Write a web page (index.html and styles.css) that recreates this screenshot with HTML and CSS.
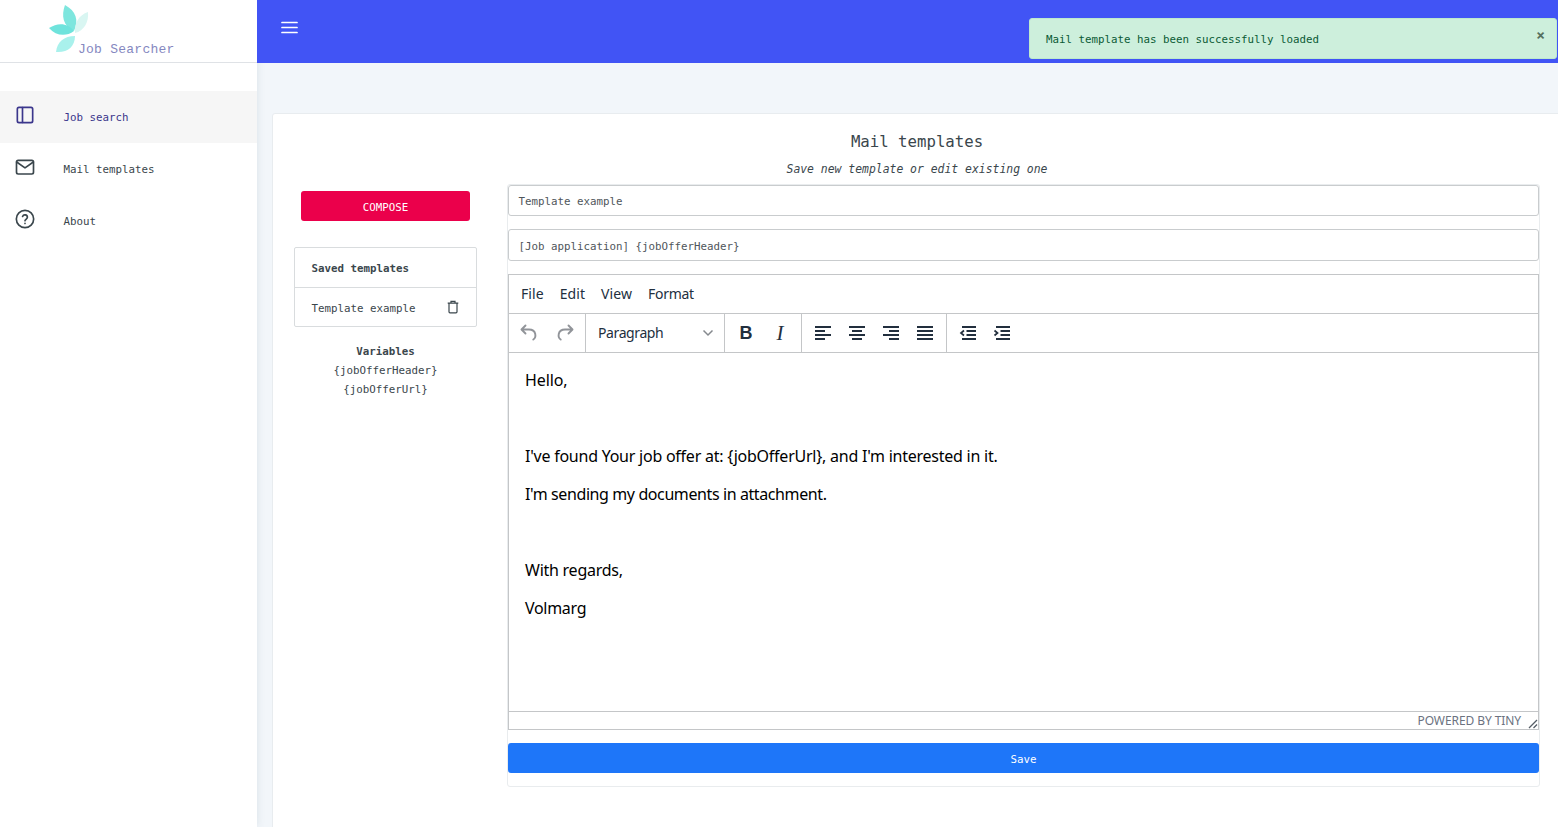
FILE: index.html
```html
<!DOCTYPE html>
<html lang="en">
<head>
<meta charset="utf-8">
<title>Job Searcher</title>
<link rel="stylesheet" href="styles.css">
</head>
<body>
<div class="app">
  <aside class="sidebar">
    <div class="brand">
      <svg class="brand-mark" width="42" height="50" viewBox="0 0 42 50">
        <path fill="#7ee6de" d="M16 0C27 6 30 15 25 26C14 21 12 11 16 0Z"/>
        <path fill="#d9f6f2" d="M39 7C40 17 35 26 26 28C25 18 30 10 39 7Z"/>
        <path fill="#6fe3dc" d="M0 23C9 17 19 18 25 26C17 32 7 31 0 23Z"/>
        <path fill="#a9f1ec" d="M26 31C26 42 18 48 7 47C8 37 15 31 26 31Z"/>
      </svg>
      <span class="brand-name">Job Searcher</span>
    </div>
    <nav class="nav">
      <a class="nav-item active">
        <svg width="20" height="20" viewBox="0 0 24 24"><rect x="2.8" y="2.8" width="18.4" height="18.4" rx="2"/><path d="M9 3v18"/></svg>
        <span>Job search</span>
      </a>
      <a class="nav-item">
        <svg width="20" height="20" viewBox="0 0 24 24"><rect x="1.8" y="4" width="20.4" height="16.4" rx="2"/><path d="M22 6l-10 7L2 6"/></svg>
        <span>Mail templates</span>
      </a>
      <a class="nav-item">
        <svg width="20" height="20" viewBox="0 0 24 24"><circle cx="12" cy="12" r="10.4"/><path d="M9.1 9a3 3 0 0 1 5.8 1c0 2-2.9 2.6-2.9 4M12 17.2v.3"/></svg>
        <span>About</span>
      </a>
    </nav>
  </aside>
  <div class="page">
    <header class="topbar">
      <svg width="18" height="14" viewBox="0 0 18 14"><path d="M1 1.500h15M1 6.500h15M1 11.500h15"/></svg>
    </header>
    <main class="card">
      <h1 class="title">Mail templates</h1>
      <p class="subtitle">Save new template or edit existing one</p>
      <div class="columns">
        <section class="side">
          <button class="compose">COMPOSE</button>
          <div class="saved">
            <div class="saved-head">Saved templates</div>
            <div class="saved-row">
              <span>Template example</span>
              <svg width="12" height="14" viewBox="0 0 12 14"><path d="M.7 3.2h10.6M2 3.2v8.6q0 1 1 1h6q1 0 1-1V3.2M4 3V1.3h4V3"/></svg>
            </div>
          </div>
          <div class="variables">
            <strong>Variables</strong>
            <span>{jobOfferHeader}</span>
            <span>{jobOfferUrl}</span>
          </div>
        </section>
        <form class="form">
          <div class="field first">Template example</div>
          <div class="field second">[Job application] {jobOfferHeader}</div>
          <div class="editor">
            <div class="menubar"><span>File</span><span>Edit</span><span>View</span><span class="m-format">Format</span></div>
            <div class="toolbar">
              <div class="group history">
                <svg class="muted" width="24" height="24" viewBox="0 0 24 24"><path d="M8.500 4.500l-4 4 4 4M5 8.500h7c3.500 0 5.600 1.700 6.200 4.300.5 2.400-.3 4.800-1.900 5.700"/></svg>
                <svg class="muted" width="24" height="24" viewBox="0 0 24 24"><path d="M15.500 4.500l4 4-4 4M19 8.500h-7c-3.500 0-5.600 1.700-6.200 4.300-.5 2.400.3 4.800 1.900 5.700"/></svg>
              </div>
              <div class="group format"><span>Paragraph</span><svg width="12" height="8" viewBox="0 0 12 8"><path d="M1.500 1.500L6 6l4.500-4.500"/></svg></div>
              <div class="group icons"><span class="bold">B</span><span class="italic">I</span></div>
              <div class="group icons">
                <svg width="24" height="24" viewBox="0 0 24 24"><path d="M4 6h16M4 10h10M4 14h16M4 18h10"/></svg>
                <svg width="24" height="24" viewBox="0 0 24 24"><path d="M4 6h16M7 10h10M4 14h16M7 18h10"/></svg>
                <svg width="24" height="24" viewBox="0 0 24 24"><path d="M4 6h16M10 10h10M4 14h16M10 18h10"/></svg>
                <svg width="24" height="24" viewBox="0 0 24 24"><path d="M4 6h16M4 10h16M4 14h16M4 18h16"/></svg>
              </div>
              <div class="group icons last">
                <svg width="24" height="24" viewBox="0 0 24 24"><path d="M6 6h14M10.500 10H20M10.500 14H20M6 18h14"/><path class="arrow" d="M8 9.500L5 12l3 2.500"/></svg>
                <svg width="24" height="24" viewBox="0 0 24 24"><path d="M6 6h14M10.500 10H20M10.500 14H20M6 18h14"/><path class="arrow" d="M4.500 9.500l3 2.500-3 2.500"/></svg>
              </div>
            </div>
            <div class="content">
              <p class="w1">Hello,</p>
              <p>&nbsp;</p>
              <p class="w2">I've found Your job offer at: {jobOfferUrl}, and I'm interested in it.</p>
              <p class="w3">I'm sending my documents in attachment.</p>
              <p>&nbsp;</p>
              <p class="w4">With regards,</p>
              <p class="w5">Volmarg</p>
            </div>
            <div class="status"><span>POWERED BY TINY</span><svg width="10" height="10" viewBox="0 0 10 10"><path d="M1 9l8-8M5.500 9L9 5.500"/></svg></div>
          </div>
          <button class="save" type="button">Save</button>
        </form>
      </div>
    </main>
  </div>
  <div class="toast"><span>Mail template has been successfully loaded</span><b>×</b></div>
</div>
</body>
</html>
```
FILE: styles.css
```css
* { box-sizing: border-box; }
body {
  margin: 0;
  overflow: hidden;
  font-family: "DejaVu Sans Mono", monospace;
  font-size: 10.8px;
  color: #3a464c;
  background: #f2f6fa;
}
button { font: inherit; border: 0; padding: 0; color: #fff; display: block; }
svg { display: block; flex: none; fill: none; }
.app { display: flex; width: 1558px; height: 827px; position: relative; overflow: hidden; }

.sidebar { flex: none; width: 257px; background: #fff; box-shadow: 0 0 8px rgba(60, 90, 110, .13); }
.brand { display: flex; height: 63px; border-bottom: 1px solid #dfe2e6; padding: 5px 0 0 49px; }
.brand-name {
  font-family: "Liberation Mono", monospace;
  font-size: 13px;
  line-height: 16px;
  letter-spacing: .25px;
  color: #8588bf;
  margin: 37px 0 0 -13px;
}
.nav { padding-top: 28px; }
.nav-item { display: flex; height: 52px; align-items: center; gap: 29px; padding-left: 14.5px; }
.nav-item span { padding-top: 1px; }
.nav-item svg { stroke: #3a464c; stroke-width: 2; stroke-linecap: round; stroke-linejoin: round; margin-bottom: 4px; }
.nav-item.active { background: #f6f6f6; color: #3b368c; }
.nav-item.active svg { stroke: #3b368c; }

.page { flex: none; width: 1304px; }
.topbar { height: 63px; background: #4154f5; padding: 21px 24px; }
.topbar svg { stroke: #fff; stroke-width: 1.7; stroke-linecap: round; }
.card {
  width: 1290px;
  height: 720px;
  margin: 50px 0 0 15px;
  border: 1px solid #e8ecef;
  border-radius: 3px;
  background: #fff;
}
.title { margin: 18px 0 0; font-size: 15.7px; font-weight: 400; line-height: 20px; text-align: center; }
.subtitle { margin: 7px 0 5px; font-size: 11.42px; line-height: 20px; font-style: italic; text-align: center; }
.columns { display: flex; gap: 30px; padding-left: 21px; }

.side { width: 183px; padding-top: 7px; }
.compose { width: 169px; height: 30px; margin: 0 7px 26px; padding-top: 2px; border-radius: 3px; background: #eb004b; }
.saved { border: 1px solid #d9dcde; border-radius: 2px; }
.saved-head { height: 40px; line-height: 40px; padding: 1px 0 0 16.5px; font-weight: 700; border-bottom: 1px solid #d9dcde; }
.saved-row { display: flex; height: 38px; align-items: center; justify-content: space-between; padding: 0 17px 0 16.5px; }
.saved-row span { padding-top: 2px; }
.saved-row svg { stroke: #3a464c; stroke-width: 1.2; }
.variables { display: flex; flex-direction: column; margin-top: 15px; line-height: 19px; text-align: center; }

.form { width: 1033px; height: 603px; border: 1px solid #e9ecee; border-radius: 3px; }
.field { width: 1031px; border: 1px solid #c9ccce; border-radius: 3px; padding: 1px 9.5px 0; color: #4f565b; }
.first { height: 31px; line-height: 29px; margin-bottom: 13px; }
.second { height: 32px; line-height: 31px; margin-bottom: 13px; }
.editor {
  width: 1031px;
  height: 456px;
  border: 1px solid #c4c6c8;
  font-family: "Noto Sans", sans-serif;
  font-size: 14px;
  color: #222f3e;
}
.menubar { display: flex; height: 39px; gap: 16px; padding-left: 12px; line-height: 38px; border-bottom: 1px solid #c4c6c8; }
.menubar span { letter-spacing: .08px; }
.menubar .m-format { letter-spacing: -.3px; }
.toolbar { display: flex; height: 39px; border-bottom: 1px solid #c4c6c8; }
.group { display: flex; align-items: center; border-right: 1px solid #c4c6c8; }
.group svg { stroke: #222f3e; stroke-width: 2; }
.history { width: 77px; padding-left: 8px; gap: 12px; }
.group .muted { stroke: #919499; stroke-width: 1.9; stroke-linecap: round; stroke-linejoin: round; }
.format { width: 139px; padding: 0 10px 0 12px; justify-content: space-between; letter-spacing: -.4px; }
.format span { padding-bottom: 2px; }
.format svg { stroke: #85898e; stroke-width: 1.5; }
.icons { padding: 0 9px; gap: 10px; }
.last { border-right: 0; }
.icons .arrow { stroke-width: 1.7; }
.bold, .italic { width: 24px; text-align: center; line-height: 24px; }
.bold { font-family: "Liberation Sans", sans-serif; font-size: 18px; font-weight: 700; }
.italic { font-family: "Liberation Serif", serif; font-size: 21px; font-style: italic; }
.content { height: 358px; padding: 16px 16px 0; color: #000; font-size: 16px; }
.content p { margin: 0 0 16px; height: 22px; line-height: 22px; }
.content .w1 { letter-spacing: -.1px; }
.content .w2 { letter-spacing: -.24px; }
.content .w3 { letter-spacing: -.4px; }
.content .w4 { letter-spacing: -.25px; }
.content .w5 { letter-spacing: -.3px; }
.status { display: flex; height: 19px; border-top: 1px solid #c4c6c8; justify-content: flex-end; gap: 7px; font-size: 12px; line-height: 17px; letter-spacing: -.08px; color: #6b7280; }
.status svg { stroke: #555d66; stroke-width: 1.3; margin-top: 7px; }
.save { width: 1031px; height: 30px; margin-top: 13px; padding-top: 2px; border-radius: 3px; background: #1e76f9; }

.toast {
  position: absolute;
  left: 1029px;
  top: 18px;
  width: 528px;
  height: 41px;
  display: flex;
  justify-content: space-between;
  padding: 0 11px 0 16px;
  border: 1px solid #bdeacd;
  border-radius: 3px;
  background: #cdefdc;
  color: #0b5b35;
  line-height: 41px;
}
.toast b { font-size: 14.5px; line-height: 32px; color: #56705f; }
```
